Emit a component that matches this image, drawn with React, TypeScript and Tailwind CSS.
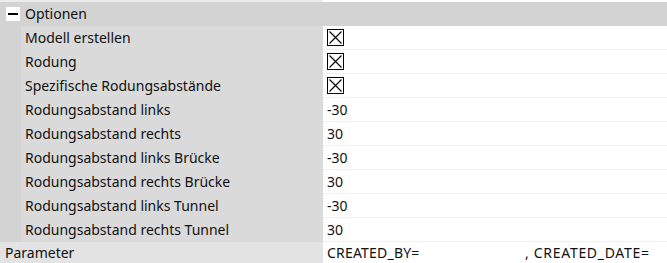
import React from 'react';

type Row = { label: string; value?: string; checked?: boolean };

const rows: Row[] = [
  { label: 'Modell erstellen', checked: true },
  { label: 'Rodung', checked: true },
  { label: 'Spezifische Rodungsabstände', checked: true },
  { label: 'Rodungsabstand links', value: '-30' },
  { label: 'Rodungsabstand rechts', value: '30' },
  { label: 'Rodungsabstand links Brücke', value: '-30' },
  { label: 'Rodungsabstand rechts Brücke', value: '30' },
  { label: 'Rodungsabstand links Tunnel', value: '-30' },
  { label: 'Rodungsabstand rechts Tunnel', value: '30' },
];

const CheckBox = () => (
  <svg width="17" height="17" viewBox="0 0 17 17" className="block">
    <rect x="0.5" y="0.5" width="16" height="16" fill="white" stroke="black" />
    <path d="M2.5 2.5 L14.5 14.5 M14.5 2.5 L2.5 14.5" stroke="black" strokeWidth="1.1" />
  </svg>
);

const App = () => {
  return (
    <div
      className="w-[667px] h-[263px] overflow-hidden bg-white text-[14px] text-[#111]"
      style={{ fontFamily: '"Noto Sans", "Open Sans", sans-serif' }}>
      {/* tail of the previous group */}
      <div className="flex h-[2px]">
        <div className="w-[323px] bg-[#ececec]" />
        <div className="flex-1 bg-white" />
      </div>

      {/* group header */}
      <div className="flex h-[24px] items-center bg-[#d3d3d3]">
        <div className="ml-[6px] flex h-[14px] w-[14px] items-center justify-center bg-white">
          <div className="h-[2px] w-[10px] bg-black" />
        </div>
        <span className="ml-[5px] leading-none">Optionen</span>
      </div>

      {rows.map((row) => (
        <div key={row.label} className="flex h-[24px]">
          <div className="w-[21px] bg-[#d3d3d3]" />
          <div className="flex w-[302px] items-center bg-[#dadada] pl-[4px] pb-[1px]">
            <span className="whitespace-nowrap leading-none">{row.label}</span>
          </div>
          <div className="flex flex-1 items-center border-b border-[#f0f0f0] bg-white pl-[4px]">
            {row.checked ? <CheckBox /> : <span className="leading-none">{row.value}</span>}
          </div>
        </div>
      ))}

      <div className="flex h-[22px]">
        <div className="flex w-[323px] items-center bg-[#e3e3e3] pl-[5px]">
          <span className="leading-none">Parameter</span>
        </div>
        <div className="flex flex-1 items-center bg-white pl-[4px] whitespace-nowrap">
          <span className="inline-block w-[198px] leading-none tracking-[0.2px]">CREATED_BY=</span>
          <span className="leading-none tracking-[0.7px]">, CREATED_DATE=</span>
        </div>
      </div>
    </div>
  );
};

export default App;
